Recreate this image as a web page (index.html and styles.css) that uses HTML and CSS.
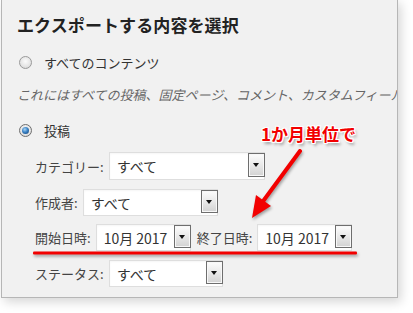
FILE: index.html
```html
<!DOCTYPE html>
<html lang="ja">
<head>
<meta charset="utf-8">
<title>エクスポート</title>
<link rel="stylesheet" href="styles.css">
</head>
<body>
<div class="panel">
  <h2 class="title">エクスポートする内容を選択</h2>
  <div class="radio-row first">
    <span class="radio"></span>
    <span class="radio-label">すべてのコンテンツ</span>
  </div>
  <p class="desc">これにはすべての投稿、固定ページ、コメント、カスタムフィールド、タクソノミー、ナビゲーションメニュー、カスタム投稿が含まれます。</p>
  <div class="radio-row second">
    <span class="radio checked"></span>
    <span class="radio-label">投稿</span>
  </div>
  <div class="filters">
    <div class="frow cat">
      <span class="lbl">カテゴリー:</span>
      <span class="sel w-cat"><span class="val">すべて</span><span class="btn"></span></span>
    </div>
    <div class="frow auth">
      <span class="lbl">作成者:</span>
      <span class="sel w-auth"><span class="val">すべて</span><span class="btn"></span></span>
    </div>
    <div class="frow date">
      <span class="lbl">開始日時:</span>
      <span class="sel w-date"><span class="val">10月 2017</span><span class="btn"></span></span>
      <span class="lbl lbl-end">終了日時:</span>
      <span class="sel w-date"><span class="val">10月 2017</span><span class="btn"></span></span>
    </div>
    <div class="frow status">
      <span class="lbl">ステータス:</span>
      <span class="sel w-status"><span class="val">すべて</span><span class="btn"></span></span>
    </div>
  </div>
</div>

<div class="note">1か月単位で</div>
<svg class="arrow" width="413" height="313" viewBox="0 0 413 313">
  <line x1="300" y1="151" x2="261" y2="204" stroke="#f20000" stroke-width="4" stroke-linecap="round"/>
  <polygon points="252,218 256,195 271,206" fill="#f20000"/>
  <rect x="33" y="251.5" width="324" height="3" rx="1" fill="#f20000"/>
</svg>
</body>
</html>
```

FILE: styles.css
```css
html, body {
  margin: 0;
  padding: 0;
  background: #fff;
  overflow: hidden;
}
body {
  width: 413px;
  height: 313px;
  position: relative;
  font-family: "Noto Sans CJK JP", "Noto Sans", sans-serif;
  color: #333;
}
.panel {
  box-sizing: border-box;
  width: 397px;
  height: 299px;
  margin: -1px 0 0 1px;
  border: 1px solid #b6b6b6;
  background: #f1f1f1;
  box-shadow: 3px 4px 10px rgba(0, 0, 0, 0.16);
  padding: 12px 0 0 15px;
  overflow: hidden;
}
.title {
  margin: 0;
  font-size: 17px;
  line-height: 25px;
  font-weight: 700;
  color: #222;
  letter-spacing: 0.1px;
}
.radio-row {
  display: flex;
  align-items: center;
  height: 20px;
  font-size: 13px;
  color: #333;
}
.radio-row.first { margin-top: 15px; }
.radio-row.second { margin-top: 15px; }
.radio {
  box-sizing: border-box;
  width: 13px;
  height: 13px;
  border-radius: 50%;
  border: 1px solid #9a9a9a;
  background: radial-gradient(circle at 50% 40%, #fbfbfb 0, #e6e6e6 55%, #cfcfcf 100%);
  margin: 0 12px 0 2px;
  position: relative;
  flex: none;
}
.radio.checked {
  border-color: #6f6f6f;
}
.radio.checked::after {
  content: "";
  position: absolute;
  left: 2px;
  top: 2px;
  width: 7px;
  height: 7px;
  border-radius: 50%;
  background: radial-gradient(circle at 40% 35%, #a9d4f5 0, #3a83c6 45%, #123a6a 100%);
}
.desc {
  margin: 13px 0 0 0;
  height: 20px;
  line-height: 20px;
  font-size: 13px;
  font-style: italic;
  color: #666;
  white-space: nowrap;
  overflow: hidden;
}
.filters {
  padding-left: 18px;
  margin-top: 12px;
}
.frow {
  display: flex;
  align-items: center;
  font-size: 13px;
  color: #444;
}
.frow.cat { height: 28px; }
.frow.auth { height: 27px; margin-top: 9px; }
.frow.date { height: 27px; margin-top: 8px; }
.frow.status { height: 27px; margin-top: 9px; }
.lbl {
  margin-right: 5px;
  white-space: nowrap;
}
.lbl-end {
  margin-left: 6px;
}
.sel {
  box-sizing: border-box;
  height: 100%;
  display: flex;
  align-items: center;
  background: #fff;
  border: 1px solid #dedede;
  box-shadow: inset 0 1px 2px rgba(0, 0, 0, 0.04);
}
.w-cat { width: 156px; }
.w-auth { width: 135px; }
.w-date { width: 95px; }
.w-status { width: 114px; }
.val {
  flex: 1;
  padding-left: 7px;
  font-size: 14px;
  color: #333;
  white-space: nowrap;
}
.btn {
  box-sizing: border-box;
  width: 17px;
  align-self: flex-start;
  height: calc(100% - 2px);
  margin-right: -1px;
  border: 1px solid #6e6e6e;
  box-shadow: inset 0 0 0 1px #f8f8f8;
  background: linear-gradient(#fdfdfd, #e9e9e9 50%, #d2d2d2);
  position: relative;
}
.btn::after {
  content: "";
  position: absolute;
  left: 4px;
  top: 50%;
  margin-top: -2px;
  border-left: 3.5px solid transparent;
  border-right: 3.5px solid transparent;
  border-top: 4px solid #111;
}
.note {
  position: absolute;
  left: 261px;
  top: 122px;
  font-size: 17px;
  font-weight: 700;
  line-height: 24px;
  color: #f20000;
  white-space: nowrap;
  text-shadow: 1px 0 0 #fff, -1px 0 0 #fff, 0 1px 0 #fff, 0 -1px 0 #fff,
    1px 1px 0 #fff, -1px -1px 0 #fff, 1px -1px 0 #fff, -1px 1px 0 #fff,
    2px 3px 3px rgba(0, 0, 0, 0.35);
}
.arrow {
  position: absolute;
  left: 0;
  top: 0;
  filter: drop-shadow(1px 2px 1.5px rgba(0, 0, 0, 0.35));
  pointer-events: none;
}
```
